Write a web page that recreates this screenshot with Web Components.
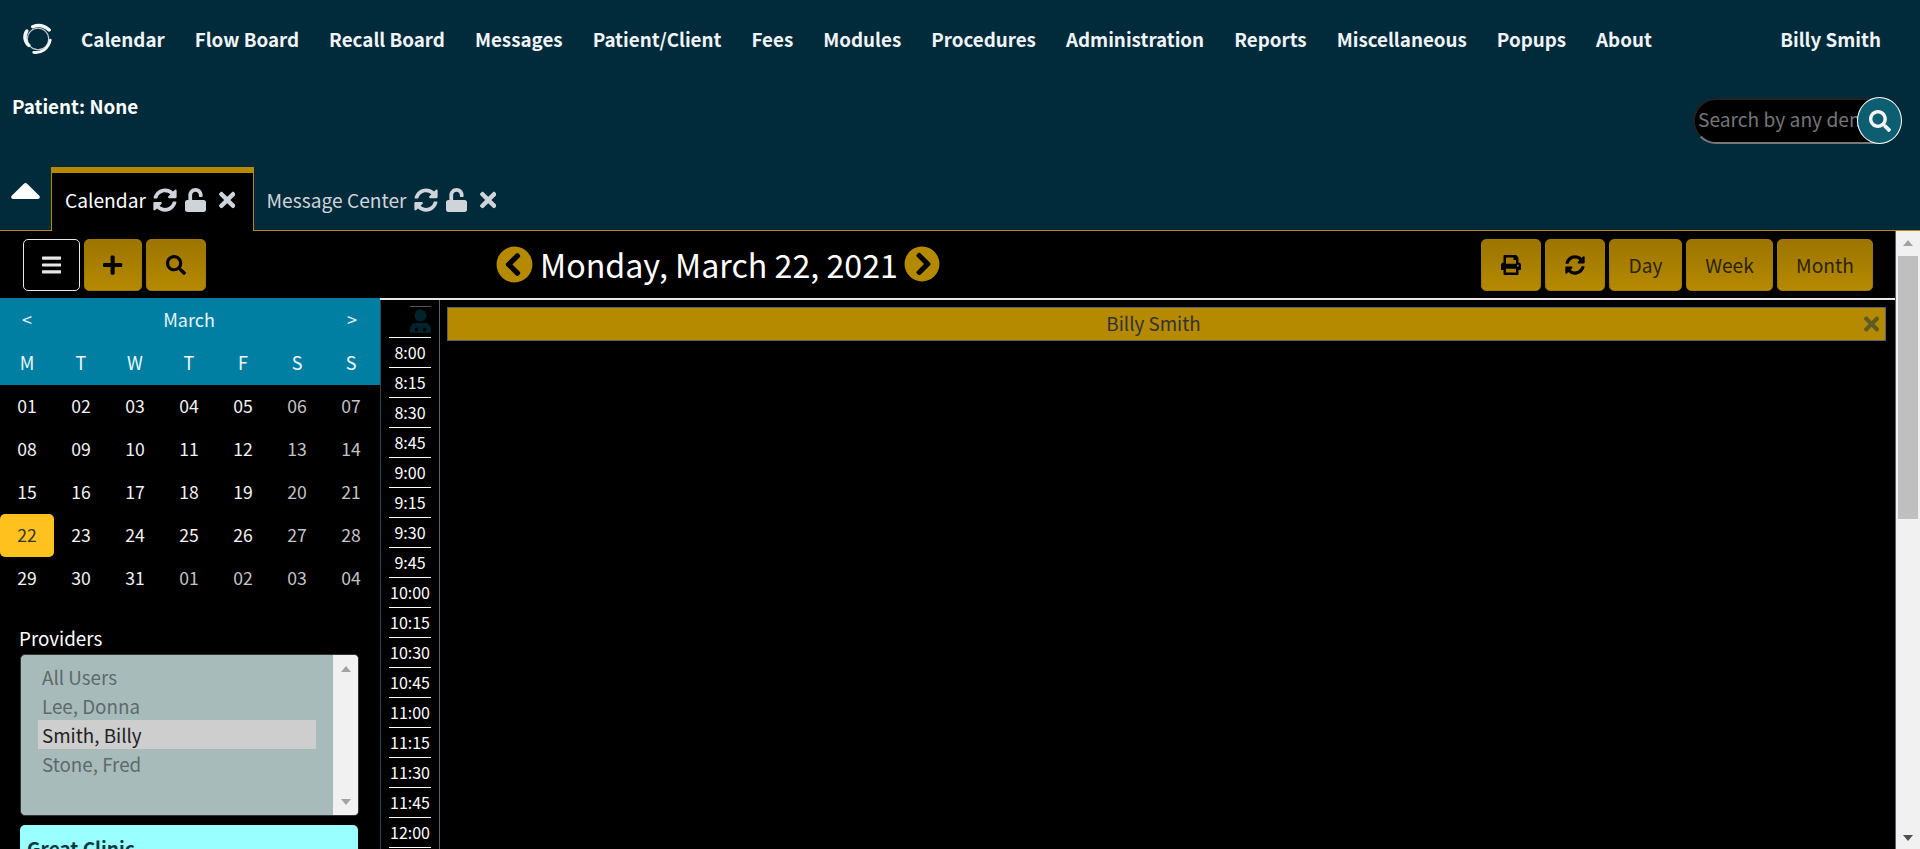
<!DOCTYPE html>
<html lang="en">
<head>
<meta charset="utf-8">
<title>Calendar</title>
<style>
  html, body { margin: 0; height: 849px; overflow: hidden; background: #000; }
  body { font-family: "Noto Sans CJK SC", "Liberation Sans", sans-serif; display: flex; flex-direction: column; }
</style>
</head>
<body>
<app-header>
  <nav-bar></nav-bar>
  <patient-bar></patient-bar>
  <tab-strip></tab-strip>
</app-header>
<cal-screen>
  <cal-toolbar></cal-toolbar>
  <div style="display:flex;flex:1;min-height:0;">
    <cal-sidebar></cal-sidebar>
    <cal-grid></cal-grid>
  </div>
</cal-screen>

<script>
// glyph paths, [viewBox width, path]
const ICONS = {
  sync: [512, 'M370.72 133.28C339.458 104.008 298.888 87.962 255.848 88c-77.458.068-144.328 53.178-162.791 126.85-1.344 5.363-6.122 9.15-11.651 9.15H24.103c-7.498 0-13.194-6.807-11.807-14.176C33.933 94.924 134.813 8 256 8c66.448 0 126.791 26.136 171.315 68.685L463.03 40.97C478.149 25.851 504 36.559 504 57.941V192c0 13.255-10.745 24-24 24H345.941c-21.382 0-32.09-25.851-16.971-40.971l41.75-41.749zM32 296h134.059c21.382 0 32.09 25.851 16.971 40.971l-41.75 41.75c31.262 29.273 71.835 45.319 114.876 45.28 77.418-.07 144.315-53.144 162.787-126.849 1.344-5.363 6.122-9.15 11.651-9.15h57.304c7.498 0 13.194 6.807 11.807 14.176C478.067 417.076 377.187 504 256 504c-66.448 0-126.791-26.136-171.315-68.685L48.97 471.03C33.851 486.149 8 475.441 8 454.059V320c0-13.255 10.745-24 24-24z'],
  unlock: [448, 'M400 256H152V152.9c0-39.6 31.7-72.5 71.3-72.9 40-.4 72.7 32.1 72.7 72v16c0 13.3 10.7 24 24 24h32c13.3 0 24-10.7 24-24v-16C376 68 307.5-.3 223.5 0 139.5.3 72 69.5 72 153.5V256H48c-26.5 0-48 21.5-48 48v160c0 26.5 21.5 48 48 48h352c26.5 0 48-21.5 48-48V304c0-26.5-21.5-48-48-48z'],
  times: [352, 'M242.72 256l100.07-100.07c12.28-12.28 12.28-32.19 0-44.48l-22.24-22.24c-12.28-12.28-32.19-12.28-44.48 0L176 189.28 75.93 89.21c-12.28-12.28-32.19-12.28-44.48 0L9.21 111.45c-12.28 12.28-12.28 32.19 0 44.48L109.28 256 9.21 356.07c-12.28 12.28-12.28 32.19 0 44.48l22.24 22.24c12.28 12.28 32.2 12.28 44.48 0L176 322.72l100.07 100.07c12.28 12.28 32.2 12.28 44.48 0l22.24-22.24c12.28-12.28 12.28-32.19 0-44.48L242.72 256z'],
  search: [512, 'M505 442.7L405.3 343c-4.5-4.5-10.6-7-17-7H372c27.6-35.3 44-79.7 44-128C416 93.1 322.9 0 208 0S0 93.1 0 208s93.1 208 208 208c48.3 0 92.7-16.4 128-44v16.3c0 6.4 2.5 12.5 7 17l99.7 99.7c9.4 9.4 24.6 9.4 33.9 0l28.3-28.3c9.4-9.4 9.4-24.6.1-34zM208 336c-70.7 0-128-57.2-128-128 0-70.7 57.2-128 128-128 70.7 0 128 57.2 128 128 0 70.7-57.2 128-128 128z'],
  bars: [448, 'M16 132h416c8.837 0 16-7.163 16-16V76c0-8.837-7.163-16-16-16H16C7.163 60 0 67.163 0 76v40c0 8.837 7.163 16 16 16zm0 160h416c8.837 0 16-7.163 16-16v-40c0-8.837-7.163-16-16-16H16c-8.837 0-16 7.163-16 16v40c0 8.837 7.163 16 16 16zm0 160h416c8.837 0 16-7.163 16-16v-40c0-8.837-7.163-16-16-16H16c-8.837 0-16 7.163-16 16v40c0 8.837 7.163 16 16 16z'],
  plus: [448, 'M416 208H272V64c0-17.67-14.33-32-32-32h-32c-17.67 0-32 14.33-32 32v144H32c-17.67 0-32 14.33-32 32v32c0 17.67 14.33 32 32 32h144v144c0 17.67 14.33 32 32 32h32c17.67 0 32-14.33 32-32V304h144c17.67 0 32-14.33 32-32v-32c0-17.67-14.33-32-32-32z'],
  print: [512, 'M448 192V77.25c0-8.49-3.37-16.62-9.37-22.63L393.37 9.37c-6-6-14.14-9.37-22.63-9.37H96C78.33 0 64 14.33 64 32v160c-35.35 0-64 28.65-64 64v112c0 8.84 7.16 16 16 16h48v96c0 17.67 14.33 32 32 32h320c17.67 0 32-14.33 32-32v-96h48c8.84 0 16-7.16 16-16V256c0-35.35-28.65-64-64-64zm-64 256H128v-96h256v96zm0-224H128V64h192v48c0 8.84 7.16 16 16 16h48v96zm48 72c-13.25 0-24-10.75-24-24 0-13.26 10.75-24 24-24s24 10.74 24 24c0 13.25-10.75 24-24 24z'],
  left: [512, 'M256 504C119 504 8 393 8 256S119 8 256 8s248 111 248 248-111 248-248 248zM142.1 273l135.5 135.5c9.4 9.4 24.6 9.4 33.9 0l17-17c9.4-9.4 9.4-24.6 0-33.9L226.9 256l101.6-101.6c9.4-9.4 9.4-24.6 0-33.9l-17-17c-9.4-9.4-24.6-9.4-33.9 0L142.1 239c-9.4 9.4-9.4 24.6 0 34z'],
  right: [512, 'M256 8c137 0 248 111 248 248S393 504 256 504 8 393 8 256 119 8 256 8zm113.9 231L234.4 103.5c-9.4-9.4-24.6-9.4-33.9 0l-17 17c-9.4 9.4-9.4 24.6 0 33.9L285.1 256 183.5 357.6c-9.4 9.4-9.4 24.6 0 33.9l17 17c9.4 9.4 24.6 9.4 33.9 0L369.9 273c9.4-9.4 9.4-24.6 0-34z']
};
function icon(name, size, color) {
  const [w, d] = ICONS[name];
  return `<svg width="${size * w / 512}" height="${size}" viewBox="0 0 ${w} 512" fill="${color || 'currentColor'}" style="display:block;flex:none"><path d="${d}"/></svg>`;
}

class AppHeader extends HTMLElement {
  connectedCallback() {
    this.attachShadow({ mode: 'open' }).innerHTML = `
      <style>
        :host { display: flex; flex-direction: column; height: 231px; background: #012b3a; flex: none; box-sizing: border-box; border-bottom: 1px solid #b58900; }
      </style>
      <slot></slot>`;
  }
}

class NavBar extends HTMLElement {
  connectedCallback() {
    const items = ['Calendar','Flow Board','Recall Board','Messages','Patient/Client','Fees','Modules','Procedures','Administration','Reports','Miscellaneous','Popups','About'];
    this.attachShadow({ mode: 'open' }).innerHTML = `
      <style>
        :host { display: flex; align-items: center; height: 78px; color: #f0f4f8; font-weight: 700; font-size: 18.8px; line-height: 24px; flex: none; }
        .logo { margin-left: 22px; width: 32px; height: 32px; margin-right: 27px; flex: none; }
        ul { display: flex; gap: 30px; list-style: none; margin: 0; padding: 0; }
        .user { margin-left: auto; margin-right: 39px; }
      </style>
      <svg class="logo" viewBox="0 0 30 30" fill="none" stroke="#f4f6f8" stroke-linecap="round">
        <circle cx="15" cy="15" r="10" stroke-width="1" opacity=".8"/>
        <path d="M10 3.500C15 1.500 21 2.500 25.500 6.500" stroke-width="3.200"/>
        <path d="M4.500 7.500C1.500 12 2.500 18 6.500 21" stroke-width="3.200"/>
        <path d="M11 27.500C18 28.500 25 24 26.500 16" stroke-width="2.600"/>
      </svg>
      <ul>${items.map(i => `<li>${i}</li>`).join('')}</ul>
      <span class="user">Billy Smith</span>`;
  }
}

class PatientBar extends HTMLElement {
  connectedCallback() {
    this.attachShadow({ mode: 'open' }).innerHTML = `
      <style>
        :host { display: flex; height: 89px; flex: none; padding: 16px 18px 0 12px; box-sizing: border-box; justify-content: space-between; align-items: flex-start; }
        .pt { color: #fff; font-weight: 700; font-size: 18.8px; line-height: 24px; }
      </style>
      <span class="pt">Patient: None</span>
      <search-pill></search-pill>`;
  }
}

class SearchPill extends HTMLElement {
  connectedCallback() {
    this.attachShadow({ mode: 'open' }).innerHTML = `
      <style>
        :host { display: block; position: relative; width: 209px; height: 46px; margin-top: 4px; }
        .field { box-sizing: border-box; width: 100%; height: 100%; background: #000; border: 2px solid #222; border-bottom-color: #777; border-radius: 23px; color: #757575; font-size: 19.2px; line-height: 39px; padding-left: 3px; overflow: hidden; white-space: nowrap; }
        .go { position: absolute; right: 0; top: -1px; box-sizing: border-box; width: 45px; height: 47px; border-radius: 50%; background: #0e5e72; border: 1px solid #fff; color: #f4f4f4; display: flex; align-items: center; justify-content: center; }
      </style>
      <div class="field">Search by any demographics</div>
      <div class="go">${icon('search', 22)}</div>`;
  }
}

class TabStrip extends HTMLElement {
  connectedCallback() {
    const ctl = c => `<span class="ctl">${icon('sync', 24, c)}${icon('unlock', 24, c)}${icon('times', 24, c)}</span>`;
    this.attachShadow({ mode: 'open' }).innerHTML = `
      <style>
        :host { display: flex; align-items: flex-end; height: 64px; flex: none; margin-bottom: -1px; }
        .caret { display: block; width: 29px; height: 16px; margin: 0 11px 32px 11px; flex: none; }
        .tab { box-sizing: border-box; height: 64px; display: flex; align-items: center; font-size: 19.2px; line-height: 24px; }
        .on { background: #000; color: #fff; border: 1px solid #b58900; border-top: 6px solid #b58900; border-bottom: 0; padding: 0 18px 4px 13px; }
        .off { color: #ced4da; padding: 2px 18px 0 12px; border-bottom: 1px solid #b58900; }
        .ctl { display: flex; align-items: center; margin-left: 7px; gap: 8px; }
        .ctl svg:last-child { margin-left: 5px; }
        .rest { flex: 1; border-bottom: 1px solid #b58900; }
      </style>
      <svg class="caret" viewBox="10 183 300 169" fill="#fff" preserveAspectRatio="none"><path d="M288.662 352H31.338c-17.818 0-26.74-21.543-14.142-34.142l128.662-128.662c7.81-7.81 20.474-7.81 28.284 0l128.662 128.662c12.598 12.599 3.676 34.142-14.142 34.142z"/></svg>
      <div class="tab on">Calendar${ctl('#ced4da')}</div>
      <div class="tab off">Message Center${ctl('#ced4da')}</div>
      <div class="rest"></div>`;
  }
}

class CalScreen extends HTMLElement {
  connectedCallback() {
    this.attachShadow({ mode: 'open' }).innerHTML = `
      <style>
        :host { display: flex; flex: 1; min-height: 0; background: #000; }
        .main { flex: 1; min-width: 0; display: flex; flex-direction: column; }
        .sb { width: 24px; background: #f1f1f1; border-left: 1px solid #5a6268; flex: none; display: flex; flex-direction: column; align-items: center; }
        .up, .down { width: 0; height: 0; border: 5.5px solid transparent; }
        .up { border-top: 0; border-bottom: 6px solid #a3a3a3; margin: 9px 0 10px; }
        .th { width: 20px; height: 263px; background: #bfbfbf; }
        .down { margin-top: auto; margin-bottom: 8px; border-bottom: 0; border-top: 6px solid #505050; }
      </style>
      <div class="main"><slot></slot></div>
      <div class="sb"><div class="up"></div><div class="th"></div><div class="down"></div></div>`;
  }
}

class CalToolbar extends HTMLElement {
  connectedCallback() {
    const b = (inner, w, cls = '') => `<button class="${cls}" style="width:${w}px">${inner}</button>`;
    this.attachShadow({ mode: 'open' }).innerHTML = `
      <style>
        :host { display: flex; align-items: flex-start; height: 67px; flex: none; box-sizing: border-box; padding: 8px 22px 0 23px; }
        .group { display: flex; gap: 4px; }
        .group.r { margin-left: auto; }
        button { font: inherit; font-family: inherit; height: 52px; padding: 0; display: flex; align-items: center; justify-content: center; border-radius: 5px; border: 1px solid #a07a00; background: linear-gradient(#9c7500, #b58900); color: #000; font-size: 19.2px; }
        button.day { color: #2c2400; }
        button.tog { background: #000; border-color: #e8e8e8; color: #e8e8e8; }
        .date { display: flex; align-items: center; gap: 7px; margin-left: 290px; height: 50px; color: #fff; font-size: 32.2px; line-height: 44px; }
        .arrow { color: #b58900; }
      </style>
      <div class="group">
        ${b(icon('bars', 22), 57, 'tog')}
        ${b(icon('plus', 22), 58)}
        ${b(icon('search', 20), 60)}
      </div>
      <div class="date">
        <span class="arrow">${icon('left', 37)}</span>
        <span>Monday, March 22, 2021</span>
        <span class="arrow" style="margin-left:-1px">${icon('right', 36)}</span>
      </div>
      <div class="group r">
        ${b(icon('print', 20), 60)}
        ${b(icon('sync', 20), 60)}
        ${b('Day', 73, 'day')}
        ${b('Week', 87, 'day')}
        ${b('Month', 96, 'day')}
      </div>`;
  }
}

class CalSidebar extends HTMLElement {
  connectedCallback() {
    const wk = ['M','T','W','T','F','S','S'];
    const days = [];
    for (let d = 1; d <= 31; d++) days.push({ d, on: true });
    for (let d = 1; d <= 4; d++) days.push({ d, on: false });
    const cells = days.map((x, i) => {
      const txt = String(x.d).padStart(2, '0');
      const cls = [(i % 7 > 4 || !x.on) ? 'mute' : '', x.d === 22 ? 'today' : ''].join(' ');
      return `<div class="${cls}">${txt}</div>`;
    }).join('');
    this.attachShadow({ mode: 'open' }).innerHTML = `
      <style>
        :host { display: block; width: 380px; flex: none; overflow: hidden; color: #fff; font-size: 17.6px; }
        .head { background: #007fa3; color: #e8f4f8; height: 87px; }
        .mon { display: grid; grid-template-columns: 54px 1fr 56px; height: 43px; line-height: 43px; text-align: center; font-size: 18px; }
        .row { display: grid; grid-template-columns: repeat(7, 54px); text-align: center; }
        .wk { height: 44px; line-height: 42px; font-size: 18px; color: #f0f8fb; }
        .days div { height: 43px; line-height: 42px; color: #f2f2f2; }
        .days .mute { color: #c4c4c4; }
        .days .today { background: #ffc11e; color: #333; border-radius: 5px; }
        .lab { margin: 26px 0 0 19px; font-size: 18.8px; line-height: 24px; height: 28px; }
        .box { margin: 0 21px 0 20px; height: 162px; box-sizing: border-box; background: #a8bbbb; border-radius: 5px; border: 1px solid #333; display: flex; overflow: hidden; }
        .opts { flex: 1; padding: 7px 17px 0 17px; font-size: 18.8px; line-height: 29px; color: #5d6a6a; }
        .opts div { padding-left: 4px; height: 29px; }
        .opts .sel { background: #cecece; color: #222; }
        .bar { width: 25px; background: #f1f1f1; display: flex; flex-direction: column; justify-content: space-between; align-items: center; padding: 11px 0 10px; }
        .tu, .td { width: 0; height: 0; border: 5.5px solid transparent; }
        .tu { border-top: 0; border-bottom: 6px solid #a3a3a3; }
        .td { border-bottom: 0; border-top: 6px solid #a3a3a3; }
        .fac { margin: 9px 22px 0 20px; background: #99ffff; border-radius: 5px; color: #0a3a44; font-weight: 700; font-size: 19px; padding: 11px 7px; line-height: 24px; height: 60px; }
      </style>
      <div class="head">
        <div class="mon"><span>&lt;</span><span>March</span><span>&gt;</span></div>
        <div class="row wk">${wk.map(w => `<div>${w}</div>`).join('')}</div>
      </div>
      <div class="row days">${cells}</div>
      <div class="lab">Providers</div>
      <div class="box">
        <div class="opts">
          <div>All Users</div><div>Lee, Donna</div><div class="sel">Smith, Billy</div><div>Stone, Fred</div>
        </div>
        <div class="bar"><div class="tu"></div><div class="td"></div></div>
      </div>
      <div class="fac">Great Clinic</div>`;
  }
}

class CalGrid extends HTMLElement {
  connectedCallback() {
    const times = [];
    for (let h = 8; h <= 11; h++) for (const m of ['00','15','30','45']) times.push(`${h}:${m}`);
    times.push('12:00');
    this.attachShadow({ mode: 'open' }).innerHTML = `
      <style>
        :host { display: flex; flex: 1; min-width: 0; overflow: hidden; box-sizing: border-box; border-top: 2px solid #e8e8e8; }
        .times { width: 60px; box-sizing: border-box; flex: none; border-left: 1px solid #2f4550; border-right: 1px solid #5a6268; padding: 6px 8px 0 8px; color: #fff; }
        .doc { height: 30px; display: flex; justify-content: flex-end; border-top: 1px solid #555; margin-left: 21px; }
        .t { height: 30px; box-sizing: border-box; border-top: 1px solid #fff; text-align: center; font-size: 16px; line-height: 29px; }
        .t:last-child { border-bottom: 1px solid #fff; height: 31px; }
        .main { flex: 1; padding: 7px 9px 0 7px; min-width: 0; }
        .prov { height: 34px; box-sizing: border-box; background: #b58900; border: 1px solid #5a6268; color: #333; font-size: 18.8px; line-height: 29px; text-align: center; padding-right: 26px; position: relative; }
        .x { position: absolute; right: 6px; top: 5px; color: #5e5a24; }
      </style>
      <div class="times">
        <div class="doc">
          <svg width="23" height="26" viewBox="0 0 23 26" fill="#02222c" style="margin-top:1px">
            <circle cx="11.500" cy="7" r="6.500"/>
            <path fill-rule="evenodd" d="M0 26v-4c0-4 3-6.500 7-7h9c4 .5 7 2.500 7 7v4zM7 20.500a2 2 0 1 0 0 4 2 2 0 0 0 0-4zM16 20.500a2 2 0 1 0 0 4 2 2 0 0 0 0-4z"/>
          </svg>
        </div>
        ${times.map(t => `<div class="t">${t}</div>`).join('')}
      </div>
      <div class="main">
        <div class="prov">Billy Smith<span class="x">${icon('times', 22)}</span></div>
      </div>`;
  }
}

customElements.define('app-header', AppHeader);
customElements.define('nav-bar', NavBar);
customElements.define('patient-bar', PatientBar);
customElements.define('search-pill', SearchPill);
customElements.define('tab-strip', TabStrip);
customElements.define('cal-screen', CalScreen);
customElements.define('cal-toolbar', CalToolbar);
customElements.define('cal-sidebar', CalSidebar);
customElements.define('cal-grid', CalGrid);
</script>
</body>
</html>
